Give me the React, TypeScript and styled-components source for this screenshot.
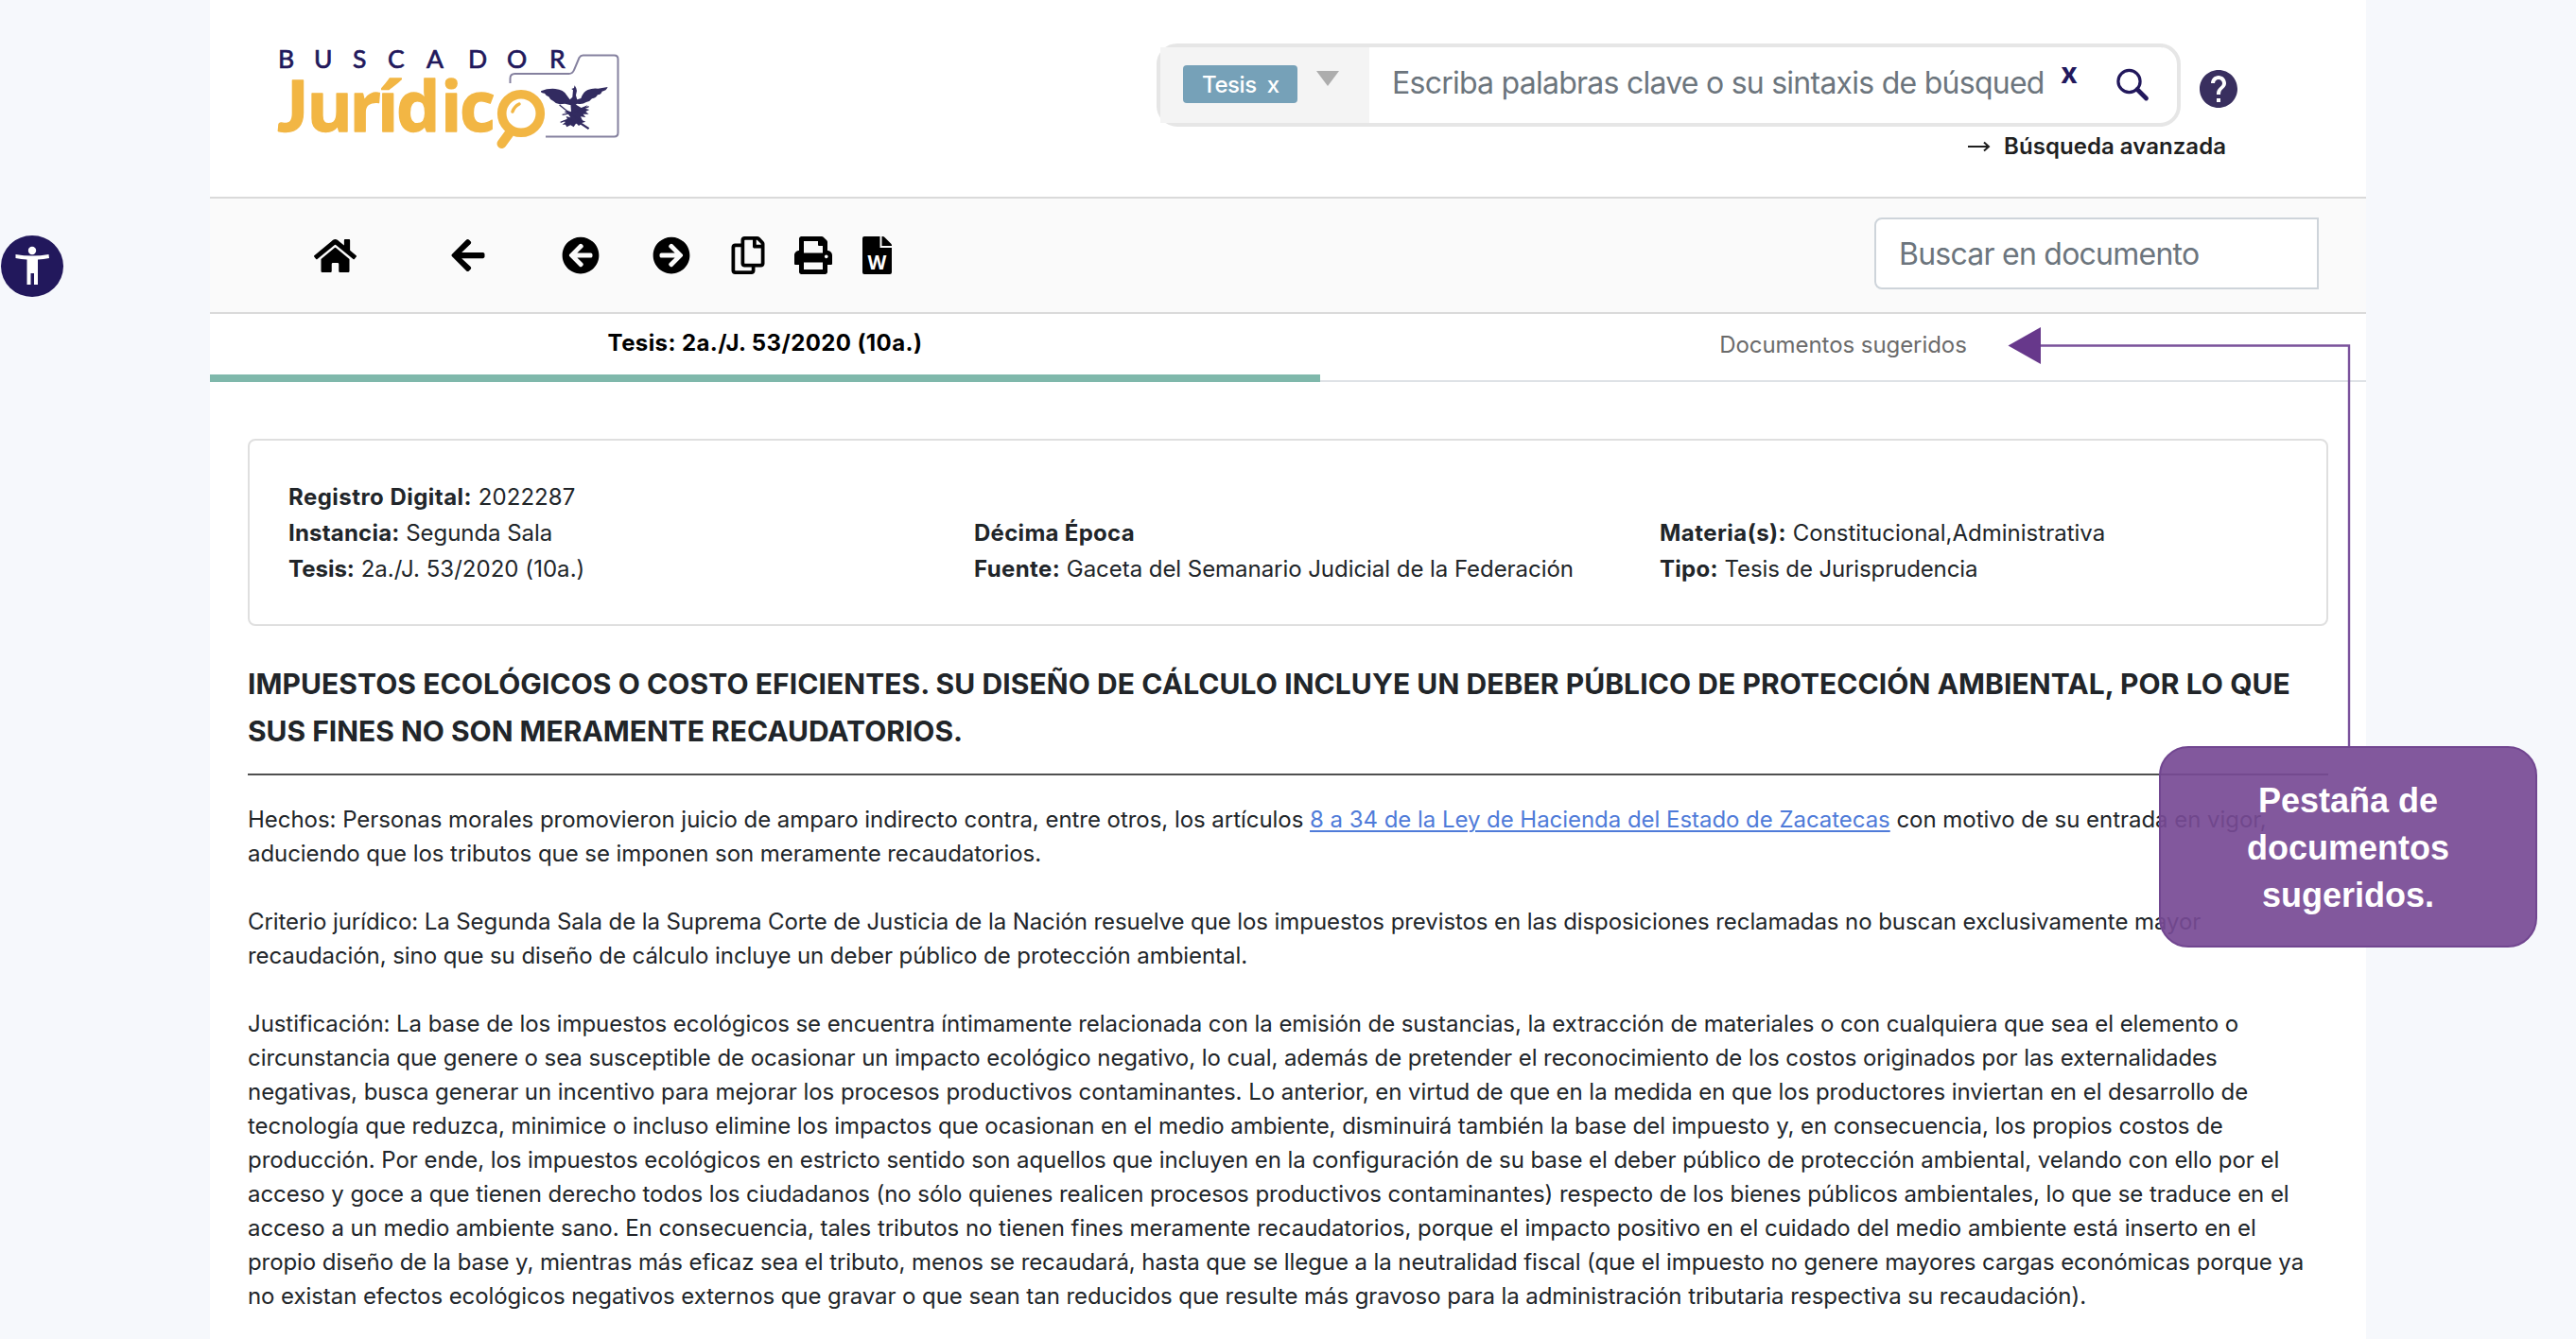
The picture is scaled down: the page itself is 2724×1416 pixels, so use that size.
import React from 'react';
import styled, { createGlobalStyle } from 'styled-components';
import { FaHome, FaArrowLeft, FaArrowCircleLeft, FaArrowCircleRight, FaRegCopy, FaPrint } from 'react-icons/fa';

const Global = createGlobalStyle`
  *, *::before, *::after { box-sizing: border-box; }
  body { margin: 0; background: #f6f8fc; font-family: Inter, "Liberation Sans", sans-serif; color: #212529; overflow: hidden; }
`;

const Page = styled.main`
  position: relative;
  width: 2724px;
  height: 1416px;
  overflow: hidden;
  display: flex;
  padding: 0 222px;
`;

const Sheet = styled.div`
  width: 2280px;
  height: 1416px;
  background: #fff;
  display: flex;
  flex-direction: column;
`;

const Header = styled.header`
  height: 208px;
  flex: none;
  display: flex;
  justify-content: space-between;
  padding: 46px 136px 0 68px;
`;

const LogoSvg = styled.svg`
  width: 365px;
  height: 115px;
  display: block;
`;

const SearchArea = styled.div`
  display: grid;
  grid-template-columns: 1083px 40px;
  grid-template-rows: 88px auto;
  column-gap: 20px;
  align-content: start;
  align-items: center;
`;

const SearchBox = styled.div`
  height: 88px;
  border: 4px solid #e6e6e6;
  border-radius: 22px;
  display: flex;
  align-items: center;
`;

const Scope = styled.div`
  width: 221px;
  height: 80px;
  background: #f4f4f4;
  display: flex;
  padding: 19px 0 0 24px;
  align-items: flex-start;
  gap: 20px;
`;

const Tag = styled.span`
  width: 121px;
  height: 40px;
  border-radius: 4px;
  background: #76a1b8;
  color: #fff;
  font-size: 24px;
  font-weight: 500;
  line-height: 42px;
  padding-left: 20px;
  word-spacing: 5px;
  letter-spacing: -0.4px;
  white-space: pre;
`;

const Caret = styled.i`
  margin-top: 6px;
  border-left: 12px solid transparent;
  border-right: 12px solid transparent;
  border-top: 16px solid #adadad;
`;

const Placeholder = styled.span<{ $ls?: number }>`
  display: block;
  font-size: 32px;
  line-height: 40px;
  color: #6c757d;
  white-space: pre;
  letter-spacing: ${p => p.$ls ?? 0}px;
`;

const Query = styled.div`
  width: 731px;
  padding: 0 0 4px 24px;
  overflow: hidden;
`;

const Clear = styled.span`
  width: 59px;
  height: 57px;
  color: #22185c;
  font-size: 31px;
  font-weight: 700;
  line-height: 30px;
`;

const HelpIcon = styled.svg`
  margin-top: 8px;
`;

const Advanced = styled.a`
  grid-column: 1 / 3;
  display: flex;
  align-items: center;
  gap: 14px;
  justify-content: flex-end;
  padding: 3px 12px 0 0;
  font-size: 24px;
  font-weight: 600;
  line-height: 36px;
  letter-spacing: 0.04px;
  color: #1f1f1f;
`;

const Toolbar = styled.div`
  height: 124px;
  flex: none;
  border-top: 2px solid #dadada;
  border-bottom: 2px solid #dadada;
  background: #fafafa;
  display: flex;
  justify-content: space-between;
  padding: 0 50px 0 110px;
`;

const Tools = styled.div`
  display: flex;
  align-items: center;
  color: #000;
  svg { display: block; }
`;

const Tool = styled.span<{ $gap: number }>`
  margin-right: ${p => p.$gap}px;
`;

const FindBox = styled.div`
  width: 470px;
  height: 76px;
  margin-top: 20px;
  border: 2px solid #ced4da;
  border-radius: 8px 0 0 8px;
  background: #fff;
  padding: 17px 24px;
`;

const Tabs = styled.nav`
  display: grid;
  grid-template-columns: 1174px 1106px;
  height: 72px;
  flex: none;
`;

const Tab = styled.div<{ $active?: boolean }>`
  text-align: center;
  font-size: 24px;
  font-weight: ${p => (p.$active ? 700 : 400)};
  letter-spacing: ${p => (p.$active ? 0.4 : -0.06)}px;
  color: ${p => (p.$active ? '#000' : '#6b6b6b')};
  border-bottom: ${p => (p.$active ? '8px solid #7fb8ab' : '2px solid #dee2e6')};
  line-height: 36px;
  padding-top: ${p => (p.$active ? 13 : 15)}px;
`;

const Doc = styled.article`
  padding: 60px 40px 0;
`;

const Card = styled.section`
  height: 198px;
  border: 2px solid #dfdfdf;
  border-radius: 8px;
  padding: 41px 41px 0;
  display: grid;
  grid-template-columns: 725px 725px auto;
  grid-auto-rows: 38px;
`;

const Field = styled.div`
  font-size: 24px;
  line-height: 38px;
  white-space: pre;
`;

const Label = styled.b<{ $ls: number }>`
  font-weight: 700;
  letter-spacing: ${p => p.$ls}px;
`;

const Value = styled.span<{ $ls: number }>`
  letter-spacing: ${p => p.$ls}px;
`;

const Title = styled.h1`
  margin: 36px 0 0;
  height: 122px;
  border-bottom: 2px solid #505050;
  font-size: 30px;
  font-weight: 700;
  line-height: 50px;
`;

const Para = styled.p`
  margin: 0 0 36px;
  font-size: 24px;
  line-height: 36px;
  &:first-of-type { margin-top: 29px; }
`;

const Line = styled.span<{ $ls?: number }>`
  display: block;
  white-space: pre;
  letter-spacing: ${p => p.$ls ?? 0}px;
`;

const Law = styled.a`
  color: #4f7bd9;
  text-decoration: underline;
  text-decoration-thickness: 2px;
  text-underline-offset: 3px;
`;

const Access = styled.div`
  position: absolute;
  left: 1px;
  top: 249px;
  width: 66px;
  height: 65px;
  border-radius: 50%;
  background: #22185c;
`;

const Pointer = styled.svg`
  position: absolute;
  left: 2120px;
  top: 340px;
`;

const Callout = styled.div`
  position: absolute;
  left: 2283px;
  top: 789px;
  width: 400px;
  height: 213px;
  border: 2px solid #714690;
  border-radius: 31px;
  background: rgba(119, 74, 149, 0.92);
  color: #fff;
  font: 700 36px/50px "Liberation Sans", Arial, sans-serif;
  text-align: center;
  padding-top: 31px;
`;

const Logo = () => (
  <LogoSvg viewBox="290 46 365 115">
    <text x="294 332 373 410 451 495 536 581" y="72" fontFamily="Lato" fontSize="26.5" fontWeight="400" fill="#22185c" stroke="#22185c" strokeWidth="0.7">BUSCADOR</text>
    <g fill="#f2b644" stroke="#f2b644" strokeWidth="1.300" strokeLinejoin="round">
      <text x="293.500" y="139" fontFamily="Lato" fontSize="74.500" fontWeight="900">J</text>
      <text x="324.500 369.500 399 419 466 486" y="139" fontFamily="Open Sans" fontSize="73.500" fontWeight="700">urídic</text>
    </g>
    <path d="M539.5 88v-5q0-5 5-5h57q4 0 5.500-4l5.500-13q1.500-2.500 4-2.500h33q4 0 4 4v78q0 4-4 4h-72.500" fill="none" stroke="#85819f" strokeWidth="2" />
    <g transform="translate(270 30) scale(.3333)" fill="#322b60">
      <path d="M906 199q22-9 46-7 26 2 36 20l10 14 8-8 2-22-5-4 8-3 2-8 5 9 2 8-3 14 4 14 12-4q8-22 22-27 14-6 32-4l31-5q-4 12-18 14-2 9-14 11-5 10-18 12-6 9-18 11-12 8-28 5l-10 4-14 0-16-4-16 2q-14-2-20-10-12-5-15-14-10-4-13-11-12-1-12-5z" />
      <path d="M1000 236l12 0 8 8 14 8 20-8-8 10 14 4-12 6 10 8-18 0 8 10-16-2 6 12 10 4-12 4 24 16-4 5-24-16-6 4-8-8-8 12-10-6-12 6-4-8-10 0 10-8-8-4 14-4-4-10 14 4-8-12-12-6 10-4 12 4z" />
      <path d="M965 243l30 24 20 14 18 20M974 274l40-8 44-18M968 298l26-10 24 12 20-6" stroke="#322b60" strokeWidth="4" fill="none" />
    </g>
    <circle cx="551" cy="120" r="20.300" fill="#fff" stroke="#f2b644" strokeWidth="9.600" />
    <path d="M538.500 141l-8 11" stroke="#f2b644" strokeWidth="10" strokeLinecap="round" />
    <path d="M542 118q2-5.500 7-8" fill="none" stroke="#f2b644" strokeWidth="3.500" strokeLinecap="round" />
  </LogoSvg>
);

type Fact = { label: string; ls: number; value?: string; vls?: number } | null;

const facts: Fact[] = [
  { label: 'Registro Digital:', ls: 0.463, value: '2022287', vls: 0.05 }, null, null,
  { label: 'Instancia:', ls: 0.2, value: 'Segunda Sala', vls: -0.05 },
  { label: 'Décima Época', ls: 0.29 },
  { label: 'Materia(s):', ls: 0.446, value: 'Constitucional,Administrativa' },
  { label: 'Tesis:', ls: 0, value: '2a./J. 53/2020 (10a.)', vls: 0.04 },
  { label: 'Fuente:', ls: 0.4, value: 'Gaceta del Semanario Judicial de la Federación', vls: -0.05 },
  { label: 'Tipo:', ls: 0.3, value: 'Tesis de Jurisprudencia', vls: -0.12 },
];

const just: [string, number][] = [
  ['Justificación: La base de los impuestos ecológicos se encuentra íntimamente relacionada con la emisión de sustancias, la extracción de materiales o con cualquiera que sea el elemento o', -0.068],
  ['circunstancia que genere o sea susceptible de ocasionar un impacto ecológico negativo, lo cual, además de pretender el reconocimiento de los costos originados por las externalidades', -0.066],
  ['negativas, busca generar un incentivo para mejorar los procesos productivos contaminantes. Lo anterior, en virtud de que en la medida en que los productores inviertan en el desarrollo de', -0.051],
  ['tecnología que reduzca, minimice o incluso elimine los impactos que ocasionan en el medio ambiente, disminuirá también la base del impuesto y, en consecuencia, los propios costos de', -0.065],
  ['producción. Por ende, los impuestos ecológicos en estricto sentido son aquellos que incluyen en la configuración de su base el deber público de protección ambiental, velando con ello por el', -0.059],
  ['acceso y goce a que tienen derecho todos los ciudadanos (no sólo quienes realicen procesos productivos contaminantes) respecto de los bienes públicos ambientales, lo que se traduce en el', -0.056],
  ['acceso a un medio ambiente sano. En consecuencia, tales tributos no tienen fines meramente recaudatorios, porque el impacto positivo en el cuidado del medio ambiente está inserto en el', -0.043],
  ['propio diseño de la base y, mientras más eficaz sea el tributo, menos se recaudará, hasta que se llegue a la neutralidad fiscal (que el impuesto no genere mayores cargas económicas porque ya', -0.084],
  ['no existan efectos ecológicos negativos externos que gravar o que sean tan reducidos que resulte más gravoso para la administración tributaria respectiva su recaudación).', -0.072],
];

export default function App() {
  return (
    <Page>
      <Global />
      <Sheet>
        <Header>
          <Logo />
          <SearchArea>
            <SearchBox>
              <Scope>
                <Tag>Tesis x</Tag>
                <Caret />
              </Scope>
              <Query><Placeholder $ls={-0.75}>Escriba palabras clave o su sintaxis de búsqued</Placeholder></Query>
              <Clear>x</Clear>
              <svg width="36" height="36" viewBox="0 0 36 36" fill="none" stroke="#22185c">
                <circle cx="13.500" cy="14" r="11.600" strokeWidth="3.200" />
                <path d="M22 22.500l9.500 9.500" strokeWidth="4.800" strokeLinecap="round" />
              </svg>
            </SearchBox>
            <HelpIcon width="40" height="40" viewBox="2 2 20 20" fill="#392f5f">
              <path d="M12 2C6.480 2 2 6.480 2 12s4.480 10 10 10 10-4.480 10-10S17.520 2 12 2zm1 17h-2v-2h2v2zm2.070-7.750l-.9.920C13.450 12.900 13 13.500 13 15h-2v-.5c0-1.100.450-2.100 1.170-2.830l1.240-1.260c.370-.360.590-.860.590-1.410 0-1.100-.9-2-2-2s-2 .9-2 2H8c0-2.210 1.790-4 4-4s4 1.790 4 4c0 .880-.360 1.680-.930 2.250z" />
            </HelpIcon>
            <Advanced>
              <svg width="24" height="12" viewBox="0 0 24 12" fill="none" stroke="#1f1f1f" strokeWidth="2">
                <path d="M0 6h22M17 1.500l5 4.500-5 4.500" />
              </svg>
              <span>Búsqueda avanzada</span>
            </Advanced>
          </SearchArea>
        </Header>
        <Toolbar>
          <Tools>
            <Tool $gap={97.5}><FaHome size={45} /></Tool>
            <Tool $gap={79}><FaArrowLeft size={40} /></Tool>
            <Tool $gap={56}><FaArrowCircleLeft size={40} /></Tool>
            <Tool $gap={41.5}><FaArrowCircleRight size={40} /></Tool>
            <Tool $gap={29}><FaRegCopy size={40} /></Tool>
            <Tool $gap={31.5}><FaPrint size={40} /></Tool>
            <svg width="31" height="40" viewBox="0 0 31 40">
              <path d="M2 0h16.500v12H31v26q0 2-2 2H2q-2 0-2-2V2q0-2 2-2z" />
              <path d="M20.500 0h1q1 0 2 1l6.500 6.500q1 1 1 2v.5H20.500z" />
              <text x="15.500" y="34.500" textAnchor="middle" fontFamily="Open Sans" fontWeight="700" fontSize="20.500" fill="#fff">W</text>
            </svg>
          </Tools>
          <FindBox><Placeholder $ls={-0.76}>Buscar en documento</Placeholder></FindBox>
        </Toolbar>
        <Tabs>
          <Tab $active>Tesis: 2a./J. 53/2020 (10a.)</Tab>
          <Tab>Documentos sugeridos</Tab>
        </Tabs>
        <Doc>
          <Card>
            {facts.map((f, i) => (
              <Field key={i}>
                {f && <Label $ls={f.ls}>{f.label}</Label>}
                {f?.value && <Value $ls={f.vls ?? 0}> {f.value}</Value>}
              </Field>
            ))}
          </Card>
          <Title>
            <Line $ls={0.068}>IMPUESTOS ECOLÓGICOS O COSTO EFICIENTES. SU DISEÑO DE CÁLCULO INCLUYE UN DEBER PÚBLICO DE PROTECCIÓN AMBIENTAL, POR LO QUE</Line>
            <Line $ls={-0.024}>SUS FINES NO SON MERAMENTE RECAUDATORIOS.</Line>
          </Title>
          <Para>
            <Line $ls={-0.041}>Hechos: Personas morales promovieron juicio de amparo indirecto contra, entre otros, los artículos <Law>8 a 34 de la Ley de Hacienda del Estado de Zacatecas</Law> con motivo de su entrada en vigor,</Line>
            <Line $ls={-0.061}>aduciendo que los tributos que se imponen son meramente recaudatorios.</Line>
          </Para>
          <Para>
            <Line $ls={-0.08}>Criterio jurídico: La Segunda Sala de la Suprema Corte de Justicia de la Nación resuelve que los impuestos previstos en las disposiciones reclamadas no buscan exclusivamente mayor</Line>
            <Line $ls={-0.073}>recaudación, sino que su diseño de cálculo incluye un deber público de protección ambiental.</Line>
          </Para>
          <Para>
            {just.map(([text, ls]) => <Line key={text} $ls={ls}>{text}</Line>)}
          </Para>
        </Doc>
      </Sheet>
      <Access>
        <svg width="66" height="66" viewBox="0 0 66 66" fill="#fff">
          <circle cx="33" cy="16" r="4.200" />
          <path d="M15.500 20q17.500 3 35 0l.5 4q-6 1.200-12 1.500V52h-4V40h-3.500v12h-4V25.500q-6-.3-12-1.500z" />
        </svg>
      </Access>
      <Pointer width="370" height="450" viewBox="0 0 370 450">
        <path d="M38 25.500H364V449" fill="none" stroke="#7a519b" strokeWidth="2.400" />
        <path d="M3.500 25.500L38 6v39z" fill="#67388b" />
      </Pointer>
      <Callout>Pestaña de<br />documentos<br />sugeridos.</Callout>
    </Page>
  );
}
